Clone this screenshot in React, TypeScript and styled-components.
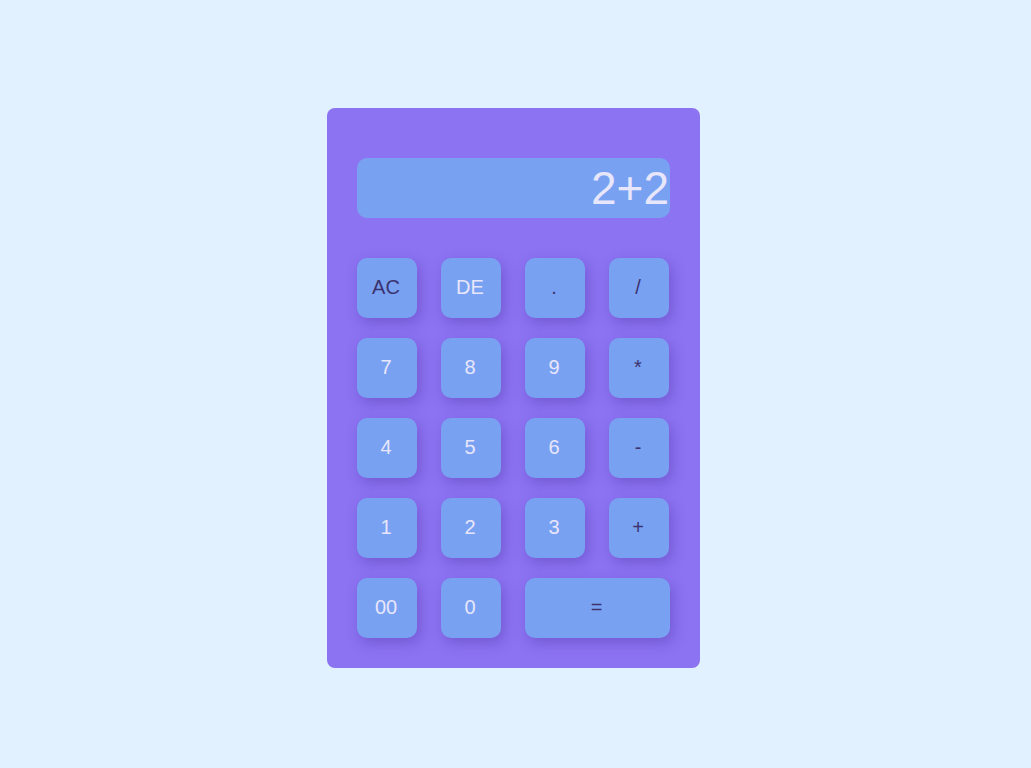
import React from "react";
import styled, { createGlobalStyle } from "styled-components";

const Global = createGlobalStyle`
  html, body { margin: 0; padding: 0; background: #e2f1ff; }
  body { font-family: "Liberation Sans", Arial, sans-serif; }
`;

const Page = styled.div`
  width: 1031px;
  height: 768px;
  display: flex;
  justify-content: flex-start;
  align-items: flex-start;
  padding: 108px 0 0 327px;
  box-sizing: border-box;
`;

const Calculator = styled.div`
  width: 373px;
  height: 560px;
  box-sizing: border-box;
  background: #8c73f2;
  border-radius: 8px;
  padding: 50px 30px 30px 30px;
  display: flex;
  flex-direction: column;
  gap: 40px;
`;

const Display = styled.div`
  height: 60px;
  width: 313px;
  background: #79a1f1;
  border-radius: 10px;
  display: flex;
  align-items: center;
  justify-content: flex-end;
  font-size: 46px;
  color: #e8e6fb;
  overflow: hidden;
  line-height: 1;
  padding-right: 1px;
  box-sizing: border-box;
`;

const Keys = styled.div`
  display: grid;
  grid-template-columns: repeat(4, 60px);
  grid-auto-rows: 60px;
  column-gap: 24px;
  row-gap: 20px;
`;

const Key = styled.button<{ $dark?: boolean; $wide?: boolean }>`
  border: none;
  outline: none;
  background: #79a1f1;
  border-radius: 10px;
  font-family: "Liberation Sans", Arial, sans-serif;
  font-size: 20px;
  line-height: 1;
  color: ${(p) => (p.$dark ? "#3b3370" : "#e8e6fb")};
  box-shadow: 3px 5px 14px rgba(70, 40, 150, 0.35);
  grid-column: ${(p) => (p.$wide ? "span 2" : "auto")};
  width: ${(p) => (p.$wide ? "145px" : "60px")};
  padding: 0 2px 2px 0;
  cursor: pointer;
`;

const keys: { label: string; dark?: boolean; wide?: boolean }[] = [
  { label: "AC", dark: true },
  { label: "DE" },
  { label: ".", dark: true },
  { label: "/", dark: true },
  { label: "7" },
  { label: "8" },
  { label: "9" },
  { label: "*", dark: true },
  { label: "4" },
  { label: "5" },
  { label: "6" },
  { label: "-", dark: true },
  { label: "1" },
  { label: "2" },
  { label: "3" },
  { label: "+", dark: true },
  { label: "00" },
  { label: "0" },
  { label: "=", dark: true, wide: true },
];

export default function App() {
  return (
    <>
      <Global />
      <Page>
        <Calculator>
          <Display>2+2</Display>
          <Keys>
            {keys.map((k) => (
              <Key key={k.label} $dark={k.dark} $wide={k.wide}>
                {k.label}
              </Key>
            ))}
          </Keys>
        </Calculator>
      </Page>
    </>
  );
}
